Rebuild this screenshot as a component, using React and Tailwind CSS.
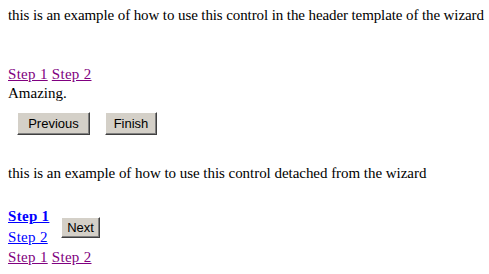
const Btn = ({ children, className = "" }) => (
  <button
    type="button"
    className={`flex items-center justify-center bg-[#d4d0c8] border border-t-white border-l-white border-r-[#404040] border-b-[#404040] shadow-[inset_-1px_-1px_0_#808080] font-['Liberation_Sans',Arial,sans-serif] text-[13px] leading-none text-black ${className}`}
  >
    {children}
  </button>
);

const VisitedSteps = () => (
  <div className="h-[19px] tracking-[0.3px]">
    <a href="#" className="text-[#800080] underline">Step 1</a>{" "}
    <a href="#" className="text-[#800080] underline">Step 2</a>
  </div>
);

export default function App() {
  return (
    <div className="min-h-screen bg-white px-2 pt-[6px] font-['Liberation_Serif','Times_New_Roman',serif] text-[15px] leading-[19px] text-black">
      <p className="h-[19px] whitespace-nowrap tracking-[-0.1px]">
        this is an example of how to use this control in the header template of the wizard
      </p>

      {/* wizard header with steps */}
      <div className="mt-[40px]">
        <VisitedSteps />
        <div className="h-[19px]">Amazing.</div>
        <div className="mt-[9px] flex gap-[15px] pl-[9px]">
          <Btn className="w-[73px] h-[23px]">Previous</Btn>
          <Btn className="w-[52px] h-[23px]">Finish</Btn>
        </div>
      </div>

      <p className="mt-[29px] h-[19px] whitespace-nowrap tracking-[-0.04px]">
        this is an example of how to use this control detached from the wizard
      </p>

      {/* detached control */}
      <div className="mt-[23px] flex items-center">
        <div className="w-[53px] tracking-[0.3px]">
          <div className="h-[21px] pt-[1px]">
            <a href="#" className="font-bold text-[#0000ff] underline">Step 1</a>
          </div>
          <div className="h-[21px] pt-[1px]">
            <a href="#" className="text-[#0000ff] underline">Step 2</a>
          </div>
        </div>
        <Btn className="w-[39px] h-[21px]">Next</Btn>
      </div>
      <VisitedSteps />
    </div>
  );
}
